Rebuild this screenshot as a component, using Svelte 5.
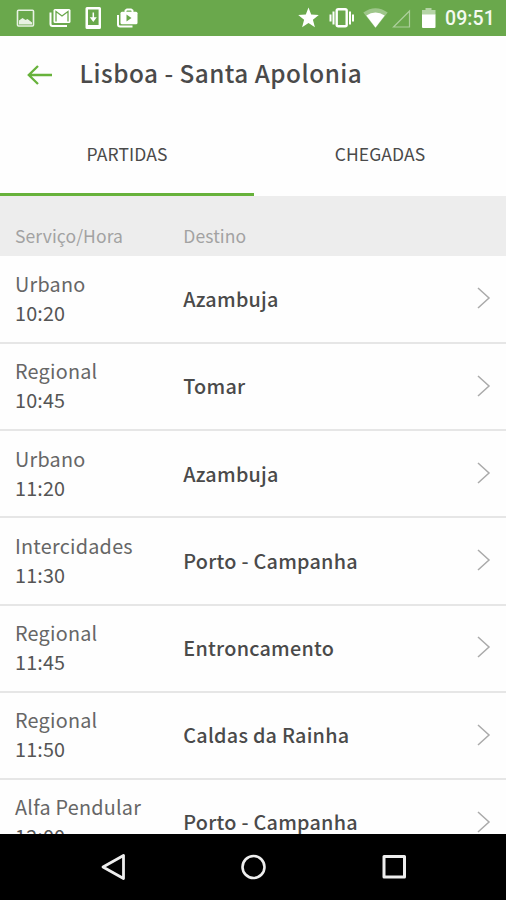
<script lang="ts">
  type Departure = { service: string; time: string; destination: string };

  const departures: Departure[] = [
    { service: 'Urbano', time: '10:20', destination: 'Azambuja' },
    { service: 'Regional', time: '10:45', destination: 'Tomar' },
    { service: 'Urbano', time: '11:20', destination: 'Azambuja' },
    { service: 'Intercidades', time: '11:30', destination: 'Porto - Campanha' },
    { service: 'Regional', time: '11:45', destination: 'Entroncamento' },
    { service: 'Regional', time: '11:50', destination: 'Caldas da Rainha' },
    { service: 'Alfa Pendular', time: '12:00', destination: 'Porto - Campanha' },
  ];

  let activeTab = $state('partidas');
</script>

<div class="screen">
  <!-- Status bar -->
  <div class="status-bar">
    <svg width="140" height="36" viewBox="0 0 140 36" fill="none" aria-hidden="true">
      <g class="dim">
        <rect x="17.5" y="10.3" width="16" height="15.7" rx="1" stroke="#fff" stroke-width="1.6"/>
        <path d="M19 24.500v-4l3.500-2.500 3 2 2-1 4.500 3.500v2z" fill="#fff"/>
      </g>
      <path d="M50.500 12.500v11.500a2 2 0 0 0 2 2h14.500" stroke="#fff" stroke-width="2"/>
      <rect x="53.500" y="9" width="17" height="14" rx="1.500" fill="#fff"/>
      <path d="M56 21.500v-10l6 4.500 6-4.500v10" stroke="#6aa84c" stroke-width="1.300"/>
      <path fill-rule="evenodd" d="M87 7h12.500q1.500 0 1.500 1.500v19q0 1.500-1.500 1.500H87q-1.500 0-1.500-1.500v-19Q85.500 7 87 7zM88 9.500v15.500h10.600V9.500z" fill="#fff"/>
      <path d="M93.300 12.500v6M91.300 18l2 2.700 2-2.700z" stroke="#fff" stroke-width="1.500" fill="#fff"/>
      <path d="M118 15v9.500a2 2 0 0 0 2 2h12.500" stroke="#fff" stroke-width="2"/>
      <path d="M125.500 13v-2.500l1.500-1h4l1.500 1V13" stroke="#fff" stroke-width="1.900"/>
      <rect x="120.500" y="11.800" width="17" height="12.400" rx="1.500" fill="#fff"/>
      <path d="M126.500 14.500v7l5-3.500z" fill="#6aa84c"/>
    </svg>

    <div class="status-right">
      <svg width="146" height="36" viewBox="294 0 146 36" fill="none" aria-hidden="true">
        <path d="M308.500 7.500l2.700 7.100 7.600.4-5.900 4.800 2 7.400-6.400-4.200-6.400 4.200 2-7.400-5.900-4.800 7.600-.4z" fill="#fff"/>
        <rect x="336.700" y="9.200" width="10" height="17" rx="1.500" stroke="#fff" stroke-width="2.400"/>
        <path d="M333.500 11.500v13M350 11.500v13M330.500 14.500v7M353 14.500v7" stroke="#fff" stroke-width="2"/>
        <path d="M363.300 12.500q12.200-8.500 24.400 0l-12.200 15.500z" fill="#fff" opacity=".35"/>
        <path d="M366.300 15.500q9.200-6 18.400 0l-9.200 12z" fill="#fff"/>
        <path d="M409.500 11v16h-16z" stroke="#fff" stroke-width="1.200" opacity=".45"/>
        <path d="M422 10h3.500V8h6v2h4v5H422z" fill="#fff" opacity=".5"/>
        <path d="M422 14.500h13.500V27a1 1 0 0 1-1 1H423a1 1 0 0 1-1-1z" fill="#fff"/>
      </svg>
      <span class="clock">09:51</span>
    </div>
  </div>

  <!-- Title -->
  <header class="app-bar">
    <button class="back-btn" aria-label="Voltar">
      <svg width="26" height="22" viewBox="0 0 26 22" fill="none" stroke="#67b23b" stroke-width="2.3" aria-hidden="true">
        <path d="M26 11H2.800M12 2L2.800 11l9.200 9"/>
      </svg>
    </button>
    <h1>Lisboa - Santa Apolonia</h1>
  </header>

  <div class="tabs" role="tablist">
    <button
      class="tab"
      class:tab--active={activeTab === 'partidas'}
      role="tab"
      aria-selected={activeTab === 'partidas'}
      onclick={() => activeTab = 'partidas'}
    ><span>PARTIDAS</span></button>
    <button
      class="tab"
      class:tab--active={activeTab === 'chegadas'}
      role="tab"
      aria-selected={activeTab === 'chegadas'}
      onclick={() => activeTab = 'chegadas'}
    ><span>CHEGADAS</span></button>
  </div>

  <div class="list-head">
    <span class="col-service">Serviço/Hora</span>
    <span>Destino</span>
  </div>

  <div class="list">
    {#each departures as dep}
      <div class="row">
        <div class="col-service">
          <div class="service">{dep.service}</div>
          <div class="time">{dep.time}</div>
        </div>
        <div class="destination">{dep.destination}</div>
        <svg class="chevron" width="14" height="24" viewBox="0 0 14 24" fill="none" stroke="#aaa" stroke-width="1.5" aria-hidden="true">
          <path d="M1 2l11 10-11 10"/>
        </svg>
      </div>
    {/each}
  </div>

  <!-- Android navigation -->
  <nav class="nav-bar">
    <svg width="26" height="28" viewBox="0 0 26 28" fill="none" stroke="#eee" stroke-width="2.800" stroke-linejoin="round" aria-hidden="true">
      <path d="M22.500 2.500v23L2 14z"/>
    </svg>
    <svg width="28" height="28" viewBox="0 0 28 28" fill="none" stroke="#eee" stroke-width="2.600" aria-hidden="true">
      <circle cx="13.500" cy="14" r="11"/>
    </svg>
    <svg width="26" height="28" viewBox="0 0 26 28" fill="none" stroke="#eee" stroke-width="3" stroke-linejoin="round" aria-hidden="true">
      <rect x="3" y="3.500" width="20.500" height="20.500"/>
    </svg>
  </nav>
</div>

<style>
  :global(body) { margin: 0; background: #fff; }

  .screen {
    width: 506px;
    height: 900px;
    display: flex;
    flex-direction: column;
    overflow: hidden;
    background: #fefefe;
    color: #4a4a4a;
    font-family: "Noto Sans CJK SC", "Open Sans", sans-serif;
  }

  button {
    padding: 0;
    border: none;
    background: transparent;
    font-family: inherit;
    color: inherit;
    cursor: pointer;
  }

  .status-bar {
    height: 35.5px;
    flex-shrink: 0;
    display: flex;
    justify-content: space-between;
    background: #6aa84c;
  }

  .dim { opacity: 0.85; }

  .status-right { display: flex; width: 212px; }

  .clock {
    padding-left: 5px;
    font-family: Roboto, sans-serif;
    font-size: 19.5px;
    font-weight: 500;
    line-height: 38px;
    letter-spacing: 0.1px;
    color: #f4faf0;
  }

  .app-bar {
    height: 78.5px;
    flex-shrink: 0;
    display: flex;
    align-items: center;
    padding-left: 25.5px;
  }

  .back-btn { display: flex; width: 54px; }

  h1 {
    margin: 0;
    padding-bottom: 3px;
    font-size: 24.3px;
    font-weight: 500;
    letter-spacing: 0.48px;
    line-height: 36px;
    white-space: nowrap;
  }

  .tabs {
    height: 82px;
    flex-shrink: 0;
    display: flex;
  }

  .tab {
    width: 252px;
    border-bottom: 3px solid transparent;
    font-size: 17.5px;
    letter-spacing: 0.1px;
    line-height: 26px;
  }

  .tab:first-child { width: 254px; }

  .tab--active { border-bottom-color: #67b23b; }

  .list-head {
    height: 60px;
    flex-shrink: 0;
    box-sizing: border-box;
    display: flex;
    padding: 27px 15px 0;
    background: #ededed;
    color: #a2a2a2;
    font-size: 17.5px;
    letter-spacing: 0.1px;
    line-height: 26px;
  }

  .col-service { width: 168.3px; flex-shrink: 0; }

  .list { flex: 1; min-height: 0; overflow: hidden; }

  .row {
    height: 87.2px;
    box-sizing: border-box;
    display: flex;
    align-items: center;
    padding: 0 15px 1.5px;
    border-bottom: 2px solid #e6e6e6;
    font-size: 19.8px;
    line-height: 29px;
    white-space: nowrap;
  }

  .row:first-child { height: 88px; }

  .row .col-service { padding-bottom: 1px; }

  .service {
    color: #666;
    letter-spacing: 0.25px;
  }

  .time {
    color: #555;
    letter-spacing: 0.15px;
  }

  .destination {
    flex: 1;
    font-weight: 500;
    letter-spacing: 0.25px;
  }

  .nav-bar {
    height: 66.5px;
    flex-shrink: 0;
    display: flex;
    align-items: center;
    justify-content: space-between;
    box-sizing: border-box;
    padding: 0 99px 0 101px;
    background: #000;
  }
</style>
